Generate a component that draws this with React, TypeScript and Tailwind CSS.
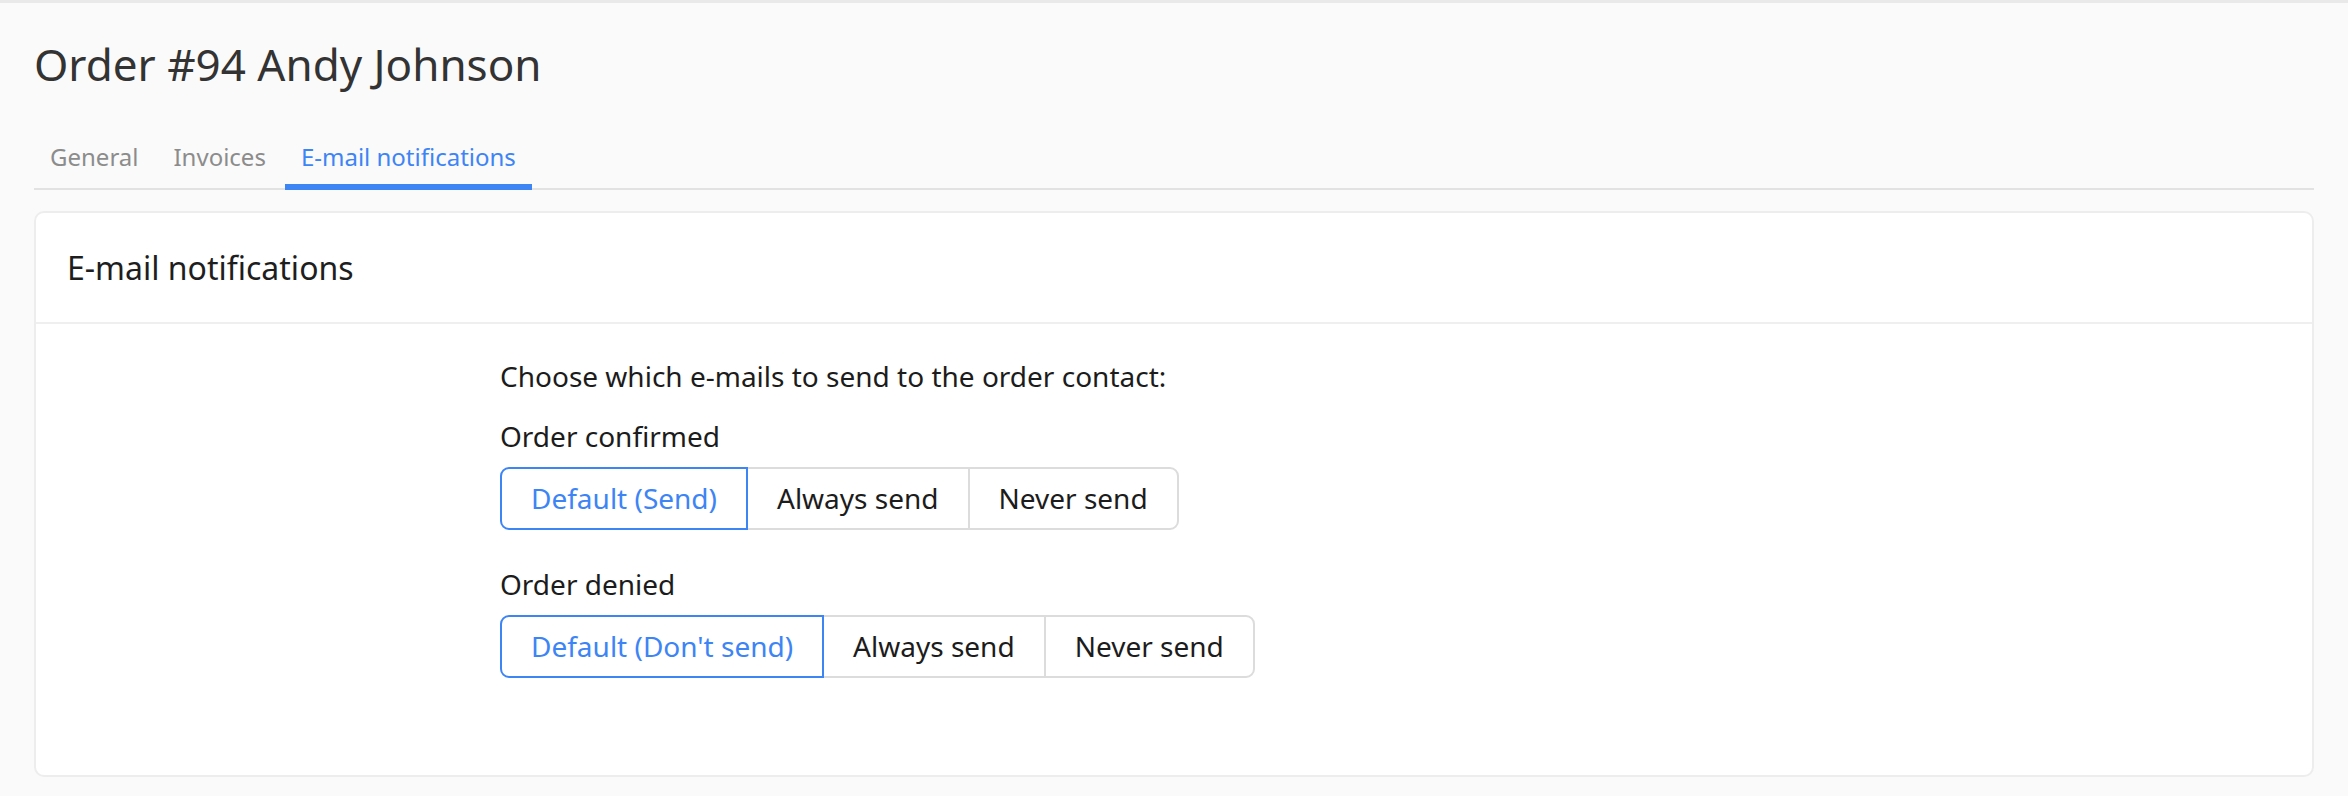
const tabs = ["General", "Invoices", "E-mail notifications"];

const groups = [
  {
    label: "Order confirmed",
    options: ["Default (Send)", "Always send", "Never send"],
  },
  {
    label: "Order denied",
    options: ["Default (Don't send)", "Always send", "Never send"],
  },
];

const SegmentedControl = ({ options }: { options: string[] }) => {
  return (
    <div className="flex">
      {options.map((option, i) => {
        const active = i === 0;
        const first = i === 0;
        const last = i === options.length - 1;
        return (
          <button
            key={option}
            type="button"
            className={[
              "relative border-2 bg-white px-[29px] py-[9px] text-[28px] leading-[41px]",
              first ? "rounded-l-[9px]" : "-ml-[2px]",
              last ? "rounded-r-[9px]" : "",
              active
                ? "z-10 border-[#3d84f5] text-[#3d84f5]"
                : "border-[#dcdcdc] text-[#1c1c1c]",
            ].join(" ")}
          >
            {option}
          </button>
        );
      })}
    </div>
  );
};

const App = () => {
  return (
    <div
      className="min-h-screen border-t-[3px] border-[#e9e9e9] bg-[#fafafa] px-[34px] pb-[20px] pt-[29px]"
      style={{ fontFamily: '"Noto Sans", "Open Sans", sans-serif' }}
    >
      <h1 className="text-[44px] font-normal leading-[64px] text-[#333333]">
        Order #94 Andy Johnson
      </h1>

      <div className="mt-[33px] flex gap-[3px] border-b-2 border-[#e2e2e2]">
        {tabs.map((tab) => {
          const active = tab === "E-mail notifications";
          return (
            <div
              key={tab}
              className={
                active
                  ? "-mb-[2px] border-b-[6px] border-[#3d84f5] px-[16px] pb-[11px] pt-[12px] text-[24px] leading-[32px] text-[#3d84f5]"
                  : "-mb-[2px] border-b-[6px] border-transparent px-[16px] pb-[11px] pt-[12px] text-[24px] leading-[32px] text-[#8c8c8c]"
              }
            >
              {tab}
            </div>
          );
        })}
      </div>

      <div className="mt-[21px] rounded-[10px] border-2 border-[#ededed] bg-white">
        <div className="border-b-2 border-[#efefef] px-[31px] py-[32px] text-[32px] leading-[45px] text-[#1e1e1e]">
          E-mail notifications
        </div>

        <div className="grid grid-cols-[432px_1fr] px-[32px] pb-[97px] pt-[32px] text-[28px] leading-[40px] text-[#1c1c1c]">
          <div />
          <div>
            <p>Choose which e-mails to send to the order contact:</p>
            {groups.map((group, i) => (
              <div key={group.label} className={i === 0 ? "mt-[20px]" : "mt-[34px]"}>
                <p className="mb-[11px]">{group.label}</p>
                <SegmentedControl options={group.options} />
              </div>
            ))}
          </div>
        </div>
      </div>
    </div>
  );
};

export default App;
